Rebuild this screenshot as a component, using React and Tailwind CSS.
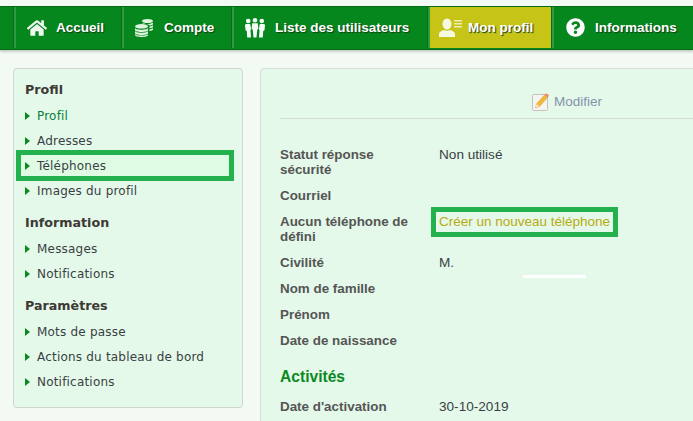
import React from "react";
import { FaHome, FaQuestionCircle } from "react-icons/fa";

const Coins = () => (
  <svg width="18" height="18" viewBox="0 0 18 18" fill="#dff3df" className="shrink-0">
    <ellipse cx="12.500" cy="2" rx="5.500" ry="2" />
    <path d="M7 3.500c1 1 3.500 1.600 5.500 1.500 2.500 0 4.500-.6 5.500-1.500V5c0 .8-1.300 1.300-3 1.600-.8-.8-2-1.300-3.500-1.500L8 5z" />
    <path d="M14.500 7.500c1.600-.2 3.500-.7 3.500-1.500v1.800c0 .8-1.700 1.300-3.500 1.500zM14.500 10.300c1.600-.2 3.500-.7 3.500-1.500v1.800c0 .8-1.700 1.300-3.500 1.500z" />
    <ellipse cx="6.500" cy="7.300" rx="6.500" ry="2.300" />
    <path d="M0 8.800c0 1.200 3 2 6.500 2s6.500-.8 6.500-2v2.100c0 1.200-3 2-6.500 2s-6.500-.8-6.500-2z" />
    <path d="M0 11.800c0 1.200 3 2 6.500 2s6.500-.8 6.500-2v2.100c0 1.200-3 2-6.500 2s-6.500-.8-6.500-2z" />
    <path d="M0 14.700c0 1.200 3 1.900 6.500 1.900s6.500-.7 6.500-1.900v1.300c0 1.200-3 2-6.500 2S0 17.200 0 16z" />
  </svg>
);

const People = () => (
  <svg width="20" height="20" viewBox="0 0 20 20" fill="#f4fbf4" className="shrink-0">
    <circle cx="3.200" cy="3" r="2.300" />
    <circle cx="10" cy="2.300" r="2.300" />
    <circle cx="16.800" cy="3" r="2.300" />
    <path d="M0 7.500C0 6.300.8 6 1.800 6h3.400l1 5.500-.7.600L6 19.500H2.200L1.800 13 .5 12.200z" />
    <path d="M20 7.500c0-1.200-.8-1.500-1.800-1.500h-3.400l-1 5.500.7.600-.5 7.400h3.800l.4-6.500 1.300-.8z" />
    <path d="M7.200 5.300h5.600l.6 5.200-1.100 1.200-.8 7.800H8.500l-.8-7.800-1.100-1.200z" />
  </svg>
);

const ProfileCard = () => (
  <svg width="23" height="20" viewBox="0 0 23 20" fill="#f7f8e0" className="shrink-0">
    <ellipse cx="8" cy="6" rx="4.500" ry="5.500" />
    <path d="M0 19v-3c0-2 3-3.500 5-4 1.500 1 4.500 1 6 0 2 .5 5 2 5 4v3z" />
    <path d="M15 2h8v1.500h-8zM15 5h8v1.500h-8zM15 8h8v1.500h-8z" opacity="0.8" />
  </svg>
);

const Pencil = () => (
  <svg width="18" height="18" viewBox="0 0 18 18" className="shrink-0">
    <rect x="0.500" y="1.500" width="15" height="16" rx="1" fill="#f4f4f0" stroke="#c4c4bd" />
    <path d="M3.500 15l1-4 8-9 3 2.500-8 9z" fill="#f0b83c" stroke="#d99a2a" strokeWidth="0.500" />
    <path d="M12.500 2l1-1.300c.5-.4 1-.4 1.500 0l1.500 1.300c.4.400.3 1-.1 1.400l-1 1.100z" fill="#e88f6a" />
    <path d="M3.500 15l1-4 3 2.500z" fill="#f5e3bf" />
  </svg>
);

const NavItem = ({ icon, label, active, w, gap, pl }) => (
  <div className={`flex h-[41px] items-center border-l-2 border-l-[#2f9a42] shadow-[-1px_0_0_#056f18] ${w} ${pl} ${gap} ${active ? "bg-[#c6c417]" : ""}`}>
    {icon}
    <span className="whitespace-nowrap text-[13.5px] font-bold leading-none text-white [text-shadow:1px_1px_1px_#123f12]">{label}</span>
  </div>
);

const SideLink = ({ children, green, boxed }) => (
  <li className="relative flex h-[25px] items-center">
    {boxed && <span className="absolute left-[-9px] top-[-3px] h-[31px] w-[218px] border-[5px] border-[#22b14c] bg-[#dffbe3]" />}
    <span className="relative mr-[7px] h-0 w-0 border-y-[4px] border-l-[5px] border-y-transparent border-l-[#0a8a20]" />
    <span className={`relative whitespace-nowrap text-xs tracking-[0.2px] ${green ? "text-[#0a7d3a]" : "text-[#3a3f44]"}`}>{children}</span>
  </li>
);

const SideGroup = ({ title, children, className = "" }) => (
  <div className={className}>
    <h3 className="mb-[1px] flex h-[25px] items-center text-[12.7px] font-bold text-[#3d3a36]">{title}</h3>
    <ul>{children}</ul>
  </div>
);

const Row = ({ label, children, h = "h-[26px]" }) => (
  <div className={`flex ${h}`}>
    <div className="w-[159px] shrink-0 pr-[20px] text-[13.4px] font-bold leading-[15px] text-[#555]">{label}</div>
    <div className="relative text-[13.6px] leading-[15px] text-[#3b3f45]">{children}</div>
  </div>
);

export default function App() {
  return (
    <div className="relative h-[421px] w-[693px] overflow-hidden bg-[#f3faf4] pt-[6px] font-['Liberation_Sans',Arial,sans-serif]">
      <nav className="flex h-[44px] items-start overflow-hidden border-y border-[#056b16] bg-[#05871d] shadow-[0_2px_2px_rgba(0,0,0,0.18)]">
        <div className="w-[14px] shrink-0" />
        <NavItem w="w-[108px]" pl="pl-[11px]" gap="gap-[9px]" icon={<FaHome size={20} color="#eef8ee" />} label="Accueil" />
        <NavItem w="w-[110px]" pl="pl-[11px]" gap="gap-[11px]" icon={<Coins />} label="Compte" />
        <NavItem w="w-[196px]" pl="pl-[11px]" gap="gap-[10px]" icon={<People />} label="Liste des utilisateurs" />
        <NavItem w="w-[124px]" pl="pl-[9px]" gap="gap-[6px]" active icon={<ProfileCard />} label="Mon profil" />
        <NavItem w="w-[141px]" pl="pl-[12px]" gap="gap-[10px]" icon={<FaQuestionCircle size={19} color="#fff" />} label="Informations" />
      </nav>

      <div className="mt-[18px] flex items-start pl-[13px]">
        <aside className="h-[340px] w-[230px] shrink-0 rounded border border-[#d0d6d0] bg-[#e4f9e9] pl-[11px] pt-[8px] font-['DejaVu_Sans',Verdana,sans-serif]">
          <SideGroup title="Profil">
            <SideLink green>Profil</SideLink>
            <SideLink>Adresses</SideLink>
            <SideLink boxed>Téléphones</SideLink>
            <SideLink>Images du profil</SideLink>
          </SideGroup>
          <SideGroup title="Information" className="mt-[7px]">
            <SideLink>Messages</SideLink>
            <SideLink>Notifications</SideLink>
          </SideGroup>
          <SideGroup title="Paramètres" className="mt-[7px]">
            <SideLink>Mots de passe</SideLink>
            <SideLink>Actions du tableau de bord</SideLink>
            <SideLink>Notifications</SideLink>
          </SideGroup>
        </aside>

        <main className="ml-[17px] h-[400px] w-[480px] shrink-0 rounded border border-[#d6dcd6] bg-[#e4f9e9] pl-[19px] pt-[24px]">
          <div className="flex h-[26px] items-start gap-[4px] border-b border-[#d5dcd8] pl-[252px]">
            <Pencil />
            <span className="text-[13.5px] leading-[18px] text-[#8494ad]">Modifier</span>
          </div>
          <div className="pt-[28px]">
            <Row label="Statut réponse sécurité" h="h-[41px]">Non utilisé</Row>
            <Row label="Courriel" />
            <Row label="Aucun téléphone de défini" h="h-[41px]">
              <span className="absolute left-[-8px] top-[-7px] h-[30px] w-[187px] border-[5px] border-[#22b14c]" />
              <span className="whitespace-nowrap text-[13.5px] text-[#b8aa12]">Créer un nouveau téléphone</span>
            </Row>
            <Row label="Civilité">M.</Row>
            <Row label="Nom de famille" />
            <Row label="Prénom" />
            <Row label="Date de naissance" />
            <h2 className="flex h-[36px] items-center text-[15.6px] font-bold text-[#0a8a1e]">Activités</h2>
            <div className="pt-[4px]">
              <Row label="Date d'activation">30-10-2019</Row>
            </div>
          </div>
        </main>
      </div>

      <div className="absolute left-[523px] top-[275px] h-[3px] w-[63px] bg-white" />
    </div>
  );
}
